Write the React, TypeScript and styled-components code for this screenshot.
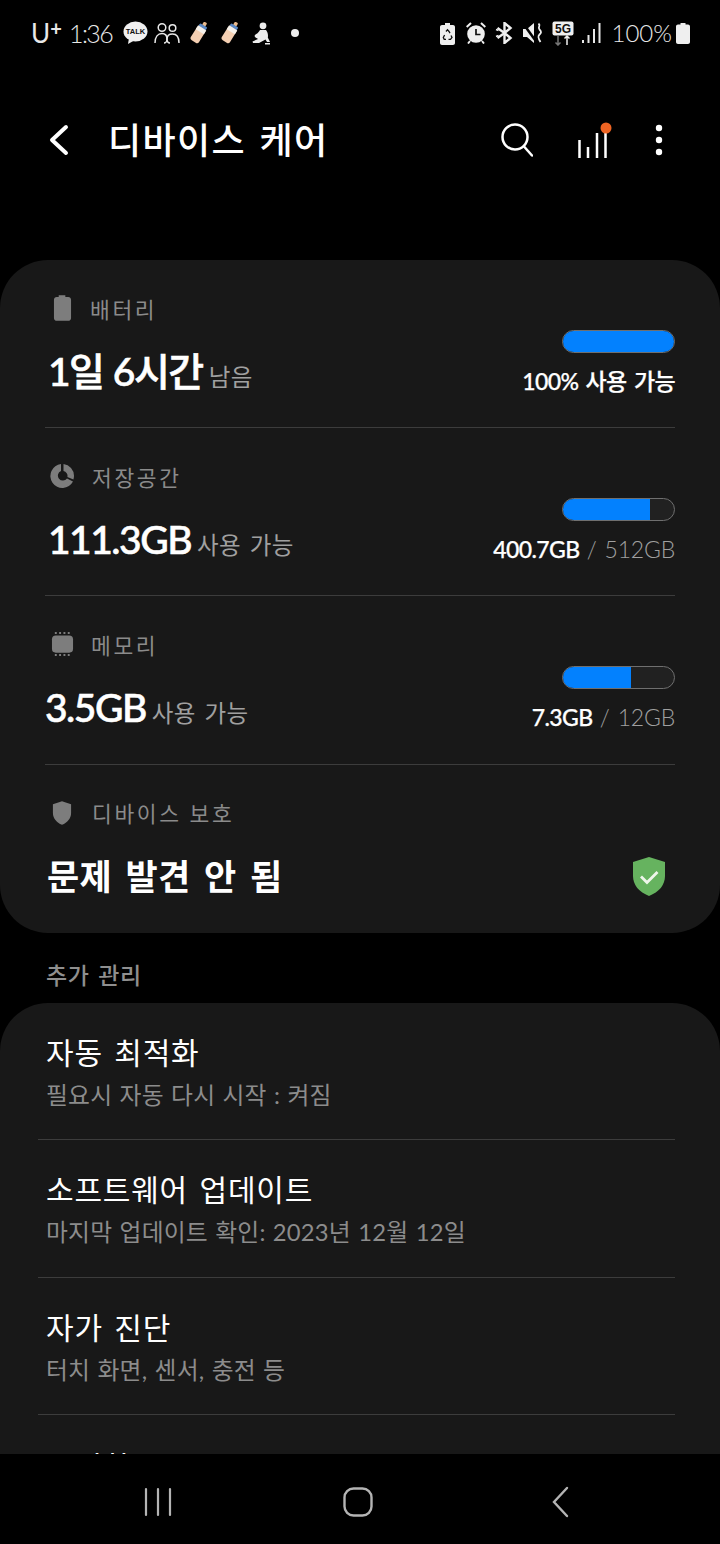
import React from "react";
import styled, { createGlobalStyle } from "styled-components";

const KR = `"Lato", "Noto Sans CJK KR", sans-serif`;

const Global = createGlobalStyle`
  html, body { margin: 0; padding: 0; background: #000; }
  body { font-family: ${KR}; color: #fff; }
  #root { width: 720px; height: 1544px; overflow: hidden; }
`;

const Page = styled.div`
  width: 720px;
  height: 1544px;
  display: flex;
  flex-direction: column;
  background: #000;
  overflow: hidden;
`;

const Scroll = styled.main`
  flex: 1;
  min-height: 0;
  overflow: hidden;
`;

const StatusBar = styled.div`
  height: 66px;
  display: flex;
  align-items: center;
  justify-content: space-between;
  padding: 0 30px 0 31px;
  color: #e8e8e8;
`;

const StatusGroup = styled.div`
  display: flex;
  align-items: center;
`;

const Carrier = styled.span`
  font-size: 26px;
  font-weight: 400;
  line-height: 30px;
  width: 38px;
  letter-spacing: -1px;
  sup {
    font-size: 20px;
    font-weight: 700;
    line-height: 0;
    vertical-align: 7px;
    margin-left: 1px;
  }
`;

const Clock = styled.span`
  font-size: 25px;
  font-weight: 300;
  width: 54px;
  line-height: 30px;
  letter-spacing: -1.6px;
`;

const TalkWrap = styled.span`
  position: relative;
  width: 25px;
  height: 24px;
  margin-right: 6px;
  display: block;
`;

const TalkLabel = styled.span`
  position: absolute;
  left: 0;
  right: 0;
  top: 6px;
  text-align: center;
  font: 700 7.5px/9px "Liberation Sans", sans-serif;
  color: #111;
`;

const StatusIcon = styled.svg<{ $gap?: number }>`
  display: block;
  flex: none;
  margin-right: ${(p) => p.$gap ?? 0}px;
`;

const Percent = styled.span`
  font-size: 24px;
  font-weight: 300;
  line-height: 30px;
  margin: 0 4px 0 11px;
`;

const Header = styled.header`
  height: 194px;
  padding: 0 57px 46px 48px;
  box-sizing: border-box;
  display: flex;
  align-items: center;
`;

const Title = styled.h1`
  flex: 1;
  margin: 0 0 0 38px;
  font-size: 36px;
  font-weight: 500;
  line-height: 40px;
  letter-spacing: 1.4px;
  word-spacing: 3px;
`;

const HeaderActions = styled.div`
  display: flex;
  align-items: center;
`;

const Card = styled.section`
  background: #181818;
  border-radius: 48px;
`;

const CareRow = styled.div<{ $divider?: boolean }>`
  height: 168.2px;
  box-sizing: border-box;
  margin: 0 45px;
  padding-top: 30px;
  display: flex;
  justify-content: space-between;
  border-bottom: ${(p) => (p.$divider ? "1.5px solid #3c3c3c" : "none")};
`;

const CareLeft = styled.div`
  display: flex;
  flex-direction: column;
`;

const CareLabel = styled.div`
  display: flex;
  align-items: center;
  height: 36px;
  color: #8b8b8b;
  font-size: 21.5px;
  letter-spacing: 2.6px;
  word-spacing: 0;
`;

const LabelIcon = styled.svg<{ $left: number; $right: number }>`
  display: block;
  margin-left: ${(p) => p.$left}px;
  margin-right: ${(p) => p.$right}px;
  flex: none;
`;

const CareValue = styled.div<{ $indent?: number }>`
  margin: 19px 0 0 ${(p) => p.$indent ?? 0}px;
  display: flex;
  align-items: baseline;
  line-height: 52px;
`;

const BigValue = styled.span`
  font-size: 39px;
  font-weight: 500;
  letter-spacing: -1.5px;
  word-spacing: 1px;
  -webkit-text-stroke: 0.6px #fff;
`;

const BigStatus = styled.span`
  font-size: 35px;
  font-weight: 700;
  letter-spacing: 0.2px;
  word-spacing: 5px;
  margin-left: 2px;
`;

const ValueNote = styled.span`
  margin-left: 6px;
  font-size: 23.5px;
  font-weight: 400;
  color: #a0a0a0;
  letter-spacing: 0.5px;
  word-spacing: 2px;
`;

const CareRight = styled.div`
  display: flex;
  flex-direction: column;
  align-items: flex-end;
  padding-top: 40px;
`;

const Bar = styled.div`
  width: 113px;
  height: 23px;
  box-sizing: border-box;
  border-radius: 12px;
  border: 1.5px solid #6f6f6f;
  background: #212121;
  overflow: hidden;
`;

const BarFill = styled.div`
  height: 100%;
  background: #0381fe;
`;

const Usage = styled.div`
  margin-top: 13px;
  font-size: 23px;
  line-height: 30px;
  font-weight: 500;
  letter-spacing: -0.6px;
  word-spacing: 2px;
  -webkit-text-stroke: 0.25px #fff;
`;

const UsageMuted = styled.span`
  font-weight: 300;
  color: #a0a0a0;
  letter-spacing: -0.2px;
  -webkit-text-stroke: 0;
`;

const ShieldSlot = styled.div`
  align-self: flex-end;
  margin: 0 10px 34px 0;
`;

const SectionTitle = styled.h2`
  margin: 0;
  height: 70px;
  padding: 25px 0 0 46px;
  box-sizing: border-box;
  font-size: 23px;
  line-height: 34px;
  font-weight: 500;
  color: #8f8f8f;
  letter-spacing: 0.7px;
  word-spacing: 2px;
`;

const ListRow = styled.div<{ $pad?: number }>`
  height: 137.4px;
  box-sizing: border-box;
  margin: 0 45px 0 38px;
  padding: ${(p) => p.$pad ?? 28}px 0 0 8px;
  border-bottom: 1.5px solid #3c3c3c;
`;

const ListTitle = styled.div`
  font-size: 30px;
  line-height: 42px;
  font-weight: 400;
  letter-spacing: 0.8px;
  word-spacing: 3px;
`;

const ListSub = styled.div`
  margin-top: 5px;
  font-size: 23.8px;
  line-height: 34px;
  color: #8c8c8c;
  letter-spacing: 0.2px;
  word-spacing: 1px;
`;

const NavBar = styled.nav`
  height: 90px;
  flex: none;
  background: #000;
  display: flex;
  align-items: center;
  padding: 5px 0 0 144px;
  box-sizing: border-box;
  position: relative;
`;

const NavIcon = styled.svg<{ $gap: number }>`
  display: block;
  flex: none;
  margin-right: ${(p) => p.$gap}px;
`;

const bottle = (
  <g transform="rotate(32 9 10.500)">
    <rect x="7.200" y="-2" width="3.600" height="4" rx="1" fill="#e9b98c" />
    <rect x="4.800" y="1.500" width="8.400" height="3.600" rx="1" fill="#5d8ac6" />
    <rect x="4.200" y="4.500" width="9.600" height="16" rx="2.500" fill="#f4cfb2" />
    <rect x="4.200" y="4.500" width="9.600" height="4.500" fill="#f6f1ea" />
  </g>
);

export default function App() {
  return (
    <Page>
      <Global />
      <StatusBar>
        <StatusGroup>
          <Carrier>U<sup>+</sup></Carrier>
          <Clock>1:36</Clock>
          <TalkWrap>
            <svg width="25" height="24" viewBox="0 0 25 24">
              <ellipse cx="12.500" cy="10.500" rx="12" ry="10" fill="#f0f0f0" />
              <path d="M6 17l-1 6 7-4z" fill="#f0f0f0" />
            </svg>
            <TalkLabel>TALK</TalkLabel>
          </TalkWrap>
          <StatusIcon $gap={10} width="26" height="22" viewBox="0 0 26 22" fill="none" stroke="#e8e8e8" strokeWidth="1.500">
            <circle cx="8" cy="5.500" r="3.800" />
            <circle cx="18.500" cy="6" r="3.300" />
            <path d="M1 21c0-6 3-9.500 7-9.500 4 0 5 3 5 5.500 0 2.500-1.600 4-3 4" />
            <path d="M25 21c0-6-2.500-9-6.500-9-4 0-5.500 2.500-5.500 5 0 2.500 1.500 4 3 4" />
          </StatusIcon>
          <StatusIcon $gap={13} width="18" height="22" viewBox="0 0 18 21">{bottle}</StatusIcon>
          <StatusIcon $gap={13} width="18" height="22" viewBox="0 0 18 21">{bottle}</StatusIcon>
          <StatusIcon $gap={18} width="20" height="23" viewBox="0 0 20 23" fill="#ededed">
            <circle cx="11" cy="3.800" r="3.400" />
            <path d="M8 8h6c1.500 2 2.400 4.500 1.800 7.500L18 20h-3l-1.500-2.500L7 21H1l-.5-1.500L6 17c-1.500-1-3-1.500-3.500-3 .5-2 3.500-2 5.500-6z" />
            <path d="M13 21h5v1.500h-5z" />
          </StatusIcon>
          <StatusIcon width="10" height="10" viewBox="0 0 10 10" fill="#eee"><circle cx="5" cy="5" r="4" /></StatusIcon>
        </StatusGroup>
        <StatusGroup>
          <StatusIcon $gap={11} width="15" height="23" viewBox="0 0 15 23">
            <path d="M5 1h5v2h3c1.100 0 2 .9 2 2v16c0 1.100-.9 2-2 2H2c-1.100 0-2-.9-2-2V5c0-1.100.9-2 2-2h3z" fill="#efefef" />
            <path d="M6 9.500l1.500-1.800 1.500 1.800 1 1.700M11 13.500l1 2-1.500 1.800H8.500M6 17.300H4.200L3.300 15.500l1.300-2.500" stroke="#111" strokeWidth="1.300" fill="none" />
          </StatusIcon>
          <StatusIcon $gap={9} width="20" height="22" viewBox="0 0 20 22">
            <circle cx="10" cy="12" r="8.800" fill="#efefef" />
            <path d="M10 7v5.500h4.500" stroke="#111" strokeWidth="1.700" fill="none" />
            <path d="M.7 5L5 1M19.300 5L15 1M4 19l-2 2.500M16 19l2 2.500" stroke="#efefef" strokeWidth="2" fill="none" />
          </StatusIcon>
          <StatusIcon $gap={9} width="19" height="22" viewBox="0 0 19 22" fill="none" stroke="#efefef" strokeWidth="2.400">
            <path d="M9.500 11L15.500 6 9.500 1v20l6-5-6-5" />
            <path d="M9.500 11L2.500 6M9.500 11l-7 5" />
            <path d="M1 7.500l2.500 1M1 14.500l2.500-1" strokeWidth="1.500" />
          </StatusIcon>
          <StatusIcon $gap={8} width="21" height="22" viewBox="0 0 21 22">
            <path d="M0 7h4l7-6v20l-7-6H0z" fill="#efefef" />
            <path d="M0.500 2l13 18" stroke="#000" strokeWidth="2.500" />
            <path d="M15.500 1.500c3 2.500-1.500 3.500 1 6s1.500 3.500 0 5 -2 3 1 7.500" stroke="#efefef" strokeWidth="1.800" fill="none" />
          </StatusIcon>
          <StatusIcon $gap={8} width="22" height="25" viewBox="0 0 22 25">
            <rect width="21" height="14" y="0.500" x="0.500" rx="2" fill="#efefef" />
            <text x="11" y="12" textAnchor="middle" fontFamily="Liberation Sans" fontWeight="700" fontSize="12" fill="#111">5G</text>
            <path d="M6 15v9M3.500 21.500L6 24l2.500-2.500" stroke="#777" strokeWidth="1.500" fill="none" />
            <path d="M15 24v-9M12.500 17.500L15 15l2.500 2.500" stroke="#efefef" strokeWidth="1.500" fill="none" />
          </StatusIcon>
          <StatusIcon width="19" height="20" viewBox="0 0 19 20" fill="#e8e8e8">
            <rect x="0" y="17" width="2" height="3" />
            <rect x="5.500" y="12" width="2" height="8" />
            <rect x="11" y="6" width="2" height="14" />
            <rect x="16.500" y="0" width="2" height="20" />
          </StatusIcon>
          <Percent>100%</Percent>
          <StatusIcon width="14" height="21" viewBox="0 0 14 21">
            <path d="M4.500 0h5v1.500H12c1.100 0 2 .9 2 2V19c0 1.100-.9 2-2 2H2c-1.100 0-2-.9-2-2V3.500c0-1.100.9-2 2-2h2.500z" fill="#efefef" />
          </StatusIcon>
        </StatusGroup>
      </StatusBar>

      <Header>
        <svg width="22" height="32" viewBox="0 0 22 32" fill="none" stroke="#fff" strokeWidth="4" strokeLinecap="round" strokeLinejoin="round">
          <path d="M18 3L4 16l14 13" />
        </svg>
        <Title>디바이스 케어</Title>
        <HeaderActions>
          <StatusIcon $gap={45} width="32" height="34" viewBox="0 0 32 34" fill="none" stroke="#fff" strokeWidth="2.500" strokeLinecap="round">
            <circle cx="14" cy="14" r="12.500" />
            <path d="M23 23.500l8 9" />
          </StatusIcon>
          <StatusIcon $gap={43} width="34" height="36" viewBox="0 0 34 36" fill="none" stroke="#fff" strokeWidth="2.500">
            <path d="M1.500 36V18M10 36V25M19 36V11M27.500 36V8" />
            <circle cx="28" cy="6" r="5.500" fill="#ee6423" stroke="none" />
          </StatusIcon>
          <StatusIcon width="8" height="32" viewBox="0 0 8 32" fill="#fff">
            <circle cx="4" cy="4" r="3.200" /><circle cx="4" cy="16" r="3.200" /><circle cx="4" cy="28" r="3.200" />
          </StatusIcon>
        </HeaderActions>
      </Header>

      <Scroll>
        <Card>
          <CareRow $divider>
            <CareLeft>
              <CareLabel>
                <LabelIcon $left={8} $right={18} width="19" height="26" viewBox="0 0 20 27">
                  <path d="M6 0h7v2h3c1.800 0 3 1.200 3 3v19c0 1.800-1.200 3-3 3H4c-1.800 0-3-1.200-3-3V5c0-1.800 1.200-3 3-3h2z" fill="#7d7d7d" />
                </LabelIcon>
                배터리
              </CareLabel>
              <CareValue $indent={3}>
                <BigValue>1일 6시간</BigValue>
                <ValueNote>남음</ValueNote>
              </CareValue>
            </CareLeft>
            <CareRight>
              <Bar><BarFill style={{ width: "100%" }} /></Bar>
              <Usage>100% 사용 가능</Usage>
            </CareRight>
          </CareRow>
          <CareRow $divider>
            <CareLeft>
              <CareLabel>
                <LabelIcon $left={5} $right={18} width="24" height="24" viewBox="0 0 24 24">
                  <path d="M11 0v7a5 5 0 1 0 6 7.500l6 3A12 12 0 1 1 11 0z" fill="#7d7d7d" />
                  <path d="M13.500 0A12 12 0 0 1 24 12a12 12 0 0 1-.6 3.500l-6-2.500a5 5 0 0 0-3.900-6z" fill="#7d7d7d" />
                </LabelIcon>
                저장공간
              </CareLabel>
              <CareValue $indent={3}>
                <BigValue>111.3GB</BigValue>
                <ValueNote>사용 가능</ValueNote>
              </CareValue>
            </CareLeft>
            <CareRight>
              <Bar><BarFill style={{ width: `${(400.7 / 512) * 100}%` }} /></Bar>
              <Usage>400.7GB <UsageMuted>/ 512GB</UsageMuted></Usage>
            </CareRight>
          </CareRow>
          <CareRow $divider>
            <CareLeft>
              <CareLabel>
                <LabelIcon $left={6} $right={17} width="23" height="26" viewBox="0 0 24 26">
                  <rect x="1" y="4" width="22" height="18" rx="4" fill="#7d7d7d" />
                  <path d="M4 1.500h16M4 24.500h16" stroke="#7d7d7d" strokeWidth="2" strokeDasharray="2 2.500" fill="none" />
                </LabelIcon>
                메모리
              </CareLabel>
              <CareValue>
                <BigValue>3.5GB</BigValue>
                <ValueNote>사용 가능</ValueNote>
              </CareValue>
            </CareLeft>
            <CareRight>
              <Bar><BarFill style={{ width: `${(7.3 / 12) * 100}%` }} /></Bar>
              <Usage>7.3GB <UsageMuted>/ 12GB</UsageMuted></Usage>
            </CareRight>
          </CareRow>
          <CareRow>
            <CareLeft>
              <CareLabel>
                <LabelIcon $left={7} $right={20} width="20" height="26" viewBox="0 0 22 26">
                  <path d="M11 0l10 3.500V13c0 6-4 10.500-10 13C5 23.500 1 19 1 13V3.500z" fill="#7d7d7d" />
                </LabelIcon>
                디바이스 보호
              </CareLabel>
              <CareValue>
                <BigStatus>문제 발견 안 됨</BigStatus>
              </CareValue>
            </CareLeft>
            <ShieldSlot>
              <svg width="32" height="39" viewBox="0 0 32 39">
                <path d="M16 0l16 5v14c0 9-6 16-16 20C6 35 0 28 0 19V5z" fill="#66b35f" />
                <path d="M8 19.500l6 6L24.500 15" stroke="#eef6ea" strokeWidth="2.800" fill="none" />
              </svg>
            </ShieldSlot>
          </CareRow>
        </Card>

        <SectionTitle>추가 관리</SectionTitle>

        <Card>
          <ListRow>
            <ListTitle>자동 최적화</ListTitle>
            <ListSub>필요시 자동 다시 시작 : 켜짐</ListSub>
          </ListRow>
          <ListRow>
            <ListTitle>소프트웨어 업데이트</ListTitle>
            <ListSub>마지막 업데이트 확인: 2023년 12월 12일</ListSub>
          </ListRow>
          <ListRow>
            <ListTitle>자가 진단</ListTitle>
            <ListSub>터치 화면, 센서, 충전 등</ListSub>
          </ListRow>
          <ListRow $pad={30}>
            <ListTitle>초기화</ListTitle>
          </ListRow>
        </Card>
      </Scroll>

      <NavBar>
        <NavIcon $gap={171} width="28" height="30" viewBox="0 0 28 30" stroke="#b4b4b4" strokeWidth="2.200" strokeLinecap="round">
          <path d="M2 2v26M14 2v26M26 2v26" />
        </NavIcon>
        <NavIcon $gap={179} width="30" height="30" viewBox="0 0 30 30" fill="none" stroke="#b4b4b4" strokeWidth="2.400">
          <rect x="1.500" y="1.500" width="27" height="27" rx="9" />
        </NavIcon>
        <NavIcon $gap={0} width="17" height="32" viewBox="0 0 17 32" fill="none" stroke="#b4b4b4" strokeWidth="2.400" strokeLinecap="round">
          <path d="M15 2L2 16l13 14" />
        </NavIcon>
      </NavBar>
    </Page>
  );
}
